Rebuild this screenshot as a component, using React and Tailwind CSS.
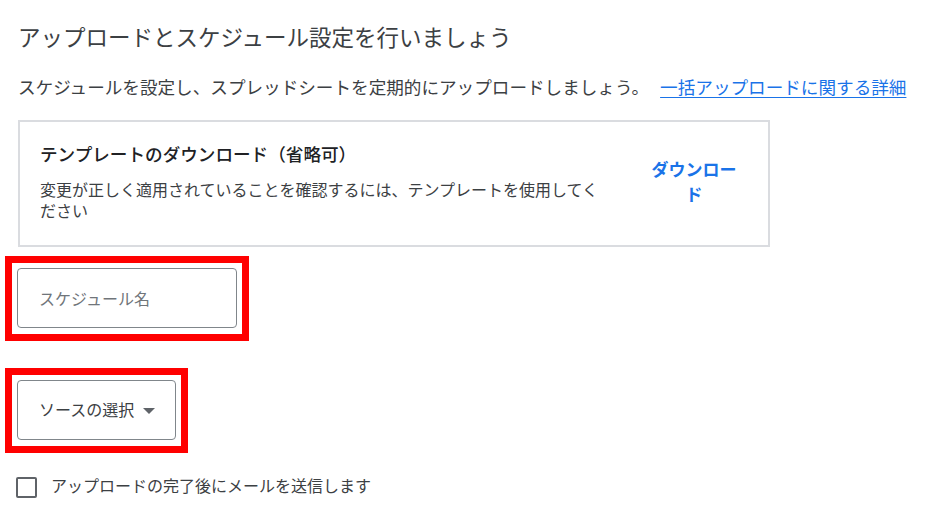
import React from 'react';

// Upload & schedule setup step (Japanese UI) with red annotation boxes
const RedBox = ({ children }) => (
  <div className="ml-[5px] inline-block border-[7px] border-[#ff0000] px-[5px] pt-[5px] pb-[6px]">{children}</div>
);

export default function App() {
  return (
    <div className="w-[950px] h-[519px] overflow-hidden bg-white font-['Roboto','Noto_Sans_CJK_JP',sans-serif] text-[#3c4043]">
      <div className="pl-[18px] pt-[24px]">
        <h1 className="text-[22.5px] leading-[28px] font-normal text-[#3c4043]">
          アップロードとスケジュール設定を行いましょう
        </h1>
        <p className="mt-[24px] text-[17.6px] leading-[24px] text-[#3c4043] whitespace-nowrap">
          スケジュールを設定し、スプレッドシートを定期的にアップロードしましょう。
          <a href="#" className="ml-[11px] text-[#1a73e8] underline underline-offset-[3px]">
            一括アップロードに関する詳細
          </a>
        </p>

        {/* template card */}
        <div className="mt-[20px] w-[752px] border-2 border-[#dadce0] flex items-center pl-[20px] pr-[16px] pt-[21px] pb-[23px]">
          <div className="w-[572px]">
            <div className="text-[17.6px] leading-[24px] font-medium text-[#202124]">
              テンプレートのダウンロード（省略可）
            </div>
            <div className="mt-[13px] text-[16px] leading-[21px] text-[#3c4043]">
              変更が正しく適用されていることを確認するには、テンプレートを使用してください
            </div>
          </div>
          <button className="ml-[24px] w-[116px] px-[8px] text-center text-[17px] leading-[25px] font-bold text-[#1a73e8]">
            ダウンロード
          </button>
        </div>
      </div>

      <div className="mt-[9px] flex flex-col items-start">
        <RedBox>
          <div className="w-[220px] h-[60px] rounded-[4px] border border-[#80868b] flex items-center pl-[21px] pt-[3px] text-[16px] text-[#70757a]">
            スケジュール名
          </div>
        </RedBox>

        <div className="mt-[27px]">
          <RedBox>
            <button className="w-[159px] h-[60px] rounded-[4px] border border-[#80868b] flex items-center pl-[21px] pt-[2px] gap-[8px] text-[16px] text-[#3c4043]">
              ソースの選択
              <svg width="12" height="6" viewBox="0 0 12 6" className="ml-[1px]">
                <path d="M0 0 L12 0 L6 6 Z" fill="#5f6368" />
              </svg>
            </button>
          </RedBox>
        </div>

        <label className="mt-[22px] ml-[16px] flex items-center gap-[14px] text-[16px] text-[#3c4043]">
          <span className="w-[21px] h-[21px] rounded-[2px] border-2 border-[#5f6368] bg-white" />
          アップロードの完了後にメールを送信します
        </label>
      </div>
    </div>
  );
}
